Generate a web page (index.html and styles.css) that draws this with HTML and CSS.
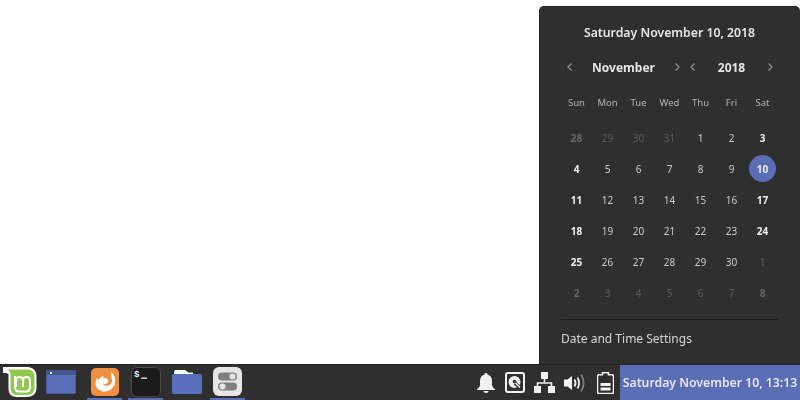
FILE: index.html
```html
<!DOCTYPE html>
<html lang="en">
<head>
  <meta charset="UTF-8">
  <title>Desktop calendar</title>
  <link rel="stylesheet" href="styles.css">
</head>
<body>
  <main class="desktop">
    <section class="calendar-popup">
      <h1 class="today">Saturday November 10, 2018</h1>
      <div class="switchers">
        <div class="switcher month-switcher">
          <svg class="chev" viewBox="0 0 8 10"><path d="M5.500 1.500 2 5l3.500 3.500"/></svg>
          <span>November</span>
          <svg class="chev" viewBox="0 0 8 10"><path d="M2.500 1.500 6 5 2.500 8.500"/></svg>
        </div>
        <div class="switcher year-switcher">
          <svg class="chev" viewBox="0 0 8 10"><path d="M5.500 1.500 2 5l3.500 3.500"/></svg>
          <span>2018</span>
          <svg class="chev" viewBox="0 0 8 10"><path d="M2.500 1.500 6 5 2.500 8.500"/></svg>
        </div>
      </div>
      <div class="weekdays">
        <span>Sun</span><span>Mon</span><span>Tue</span><span>Wed</span><span>Thu</span><span>Fri</span><span>Sat</span>
      </div>
      <div class="days">
        <span class="other weekend">28</span><span class="other">29</span><span class="other">30</span><span class="other">31</span><span>1</span><span>2</span><span class="weekend">3</span>
        <span class="weekend">4</span><span>5</span><span>6</span><span>7</span><span>8</span><span>9</span><span class="selected">10</span>
        <span class="weekend">11</span><span>12</span><span>13</span><span>14</span><span>15</span><span>16</span><span class="weekend">17</span>
        <span class="weekend">18</span><span>19</span><span>20</span><span>21</span><span>22</span><span>23</span><span class="weekend">24</span>
        <span class="weekend">25</span><span>26</span><span>27</span><span>28</span><span>29</span><span>30</span><span class="other">1</span>
        <span class="other weekend">2</span><span class="other">3</span><span class="other">4</span><span class="other">5</span><span class="other">6</span><span class="other">7</span><span class="other weekend">8</span>
      </div>
      <div class="settings-link">Date and Time Settings</div>
    </section>
  </main>

  <footer class="panel">
    <div class="launcher">
      <svg class="menu-icon" viewBox="0 0 34 30">
        <path d="M0 0h24c6 0 9.500 3.500 9.500 9v12c0 5.500-3.500 9-9.500 9H14c-5.500 0-8.500-3-8.500-8.500V8C5.500 6.500 4.500 6 0 6z" fill="#fff"/>
        <path d="M3.500 2.500H24c4.500 0 7.500 2.500 7.500 6.500v12c0 4.500-3 7-7.500 7H14c-3.500 0-6.500-2.500-6.500-6.500V7c0-2-1.500-4-4-4.500z" fill="#8fc94f"/>
        <path d="M12 9v11c0 3 1.500 4.500 4 4.500h7c2.500 0 4-1.500 4-4.500v-6c0-2.500-1.500-4-3.500-4s-3.500 1.500-3.500 4v6M20 14c0-2.500-1.500-4-3.500-4S13 11.500 13 14v6" fill="none" stroke="#fff" stroke-width="2.100"/>
      </svg>
    </div>

    <div class="task task-start">
      <svg class="icon-window" viewBox="0 0 30 24">
        <rect x=".5" y=".5" width="29" height="23" rx="1" fill="#5a6fba" stroke="#4a5c9e"/>
        <rect width="30" height="5" fill="#45568f"/>
        <rect x="4" y="2" width="2" height="2" fill="#fff"/>
      </svg>
    </div>
    <div class="task active">
      <svg class="icon-28" viewBox="0 0 28 28">
        <rect width="28" height="28" rx="5" fill="#ef8f3f"/>
        <path d="M20 4c4 3 5 8 3.500 12.500C21.500 21.500 17 24 12.500 23.500 8 23 4.500 19.500 4.500 15c0-2 .8-4 2-5.500 0 1.500.5 2.300 1.300 2.800C8.500 10 10.500 8 13.500 7.500c-1 1-1.500 1.800-1.500 2.500 2-.3 5 .3 5.500 3-.5 2.500-3 3.500-5.500 3 1 1.500 3.500 2.500 6 1.300 3-1.500 3.800-5 2.500-8-.5-2-1-3.500-.5-5.800z" fill="#fff"/>
      </svg>
    </div>
    <div class="task active">
      <svg class="icon-30" viewBox="0 0 30 30">
        <rect x=".5" y=".5" width="29" height="29" rx="5" fill="#1b1b1b" stroke="#4a4a4a"/>
        <text x="3" y="10" class="prompt">$</text>
        <rect x="10" y="10.500" width="6" height="1.300" fill="#eee"/>
      </svg>
    </div>
    <div class="task">
      <svg class="icon-folder" viewBox="0 0 30 24">
        <path d="M2 4V2c0-1.200.8-2 2-2h8c2 0 3 1.500 4.500 2.500H21V4z" fill="#fff"/>
        <rect y="4" width="30" height="20" rx="1.500" fill="#5a6fba"/>
      </svg>
    </div>
    <div class="task active">
      <svg class="icon-29" viewBox="0 0 29 29">
        <rect width="29" height="29" rx="6" fill="#e6e6e6"/>
        <rect x="5" y="5.500" width="19" height="8" rx="4" fill="#808080"/>
        <circle cx="19.500" cy="9.500" r="3" fill="#e6e6e6"/>
        <rect x="5" y="15.500" width="19" height="8" rx="4" fill="#808080"/>
        <circle cx="9.500" cy="19.500" r="3" fill="#e6e6e6"/>
      </svg>
    </div>

    <div class="tray">
      <svg class="tray-icon bell" viewBox="0 0 18 20">
        <path d="M9 0c1 0 1.500.7 1.500 1.500C13.500 2.300 15 4.800 15 8v4c0 1.500 1.500 3 3 4v1H0v-1c1.500-1 3-2.500 3-4V8c0-3.200 1.500-5.700 4.500-6.500C7.500.7 8 0 9 0z" fill="#f2f2f2"/>
        <path d="M6.500 18h5c0 1.200-1 2-2.500 2s-2.500-.8-2.500-2z" fill="#f2f2f2"/>
      </svg>
      <svg class="tray-icon disk" viewBox="0 0 20 21">
        <rect x="1" y="1" width="18" height="19" rx="2" fill="none" stroke="#f2f2f2" stroke-width="2"/>
        <circle cx="9.500" cy="10" r="6" fill="#f2f2f2"/>
        <circle cx="9.500" cy="9.500" r="1.800" fill="#2f2f2f"/>
        <path d="m10 11 5 5" stroke="#2f2f2f" stroke-width="3.500"/>
        <path d="m10.500 11 4.500 4.500" stroke="#f2f2f2" stroke-width="1.500"/>
      </svg>
      <svg class="tray-icon network" viewBox="0 0 21 21">
        <path d="M7 0h7v7H7zM0 14h7v7H0zM14 14h7v7h-7z" fill="#f2f2f2"/>
        <path d="M10.500 7v4M3.500 14v-3h14v3" fill="none" stroke="#f2f2f2" stroke-width="1.600"/>
      </svg>
      <svg class="tray-icon volume" viewBox="0 0 21 20">
        <path d="M0 6.500h3.500L8 3v14l-4.500-3.500H0z" fill="#f2f2f2"/>
        <path d="M10.500 6.500c1.200 2 1.200 5 0 7" fill="none" stroke="#f2f2f2" stroke-width="1.800"/>
        <path d="M13.500 4.500c2 3 2 8 0 11" fill="none" stroke="#f2f2f2" stroke-width="1.800"/>
        <path d="M17 1.500c3.500 4.500 3.500 12.500 0 17" fill="none" stroke="#7c7c7c" stroke-width="1.800"/>
      </svg>
      <svg class="tray-icon battery" viewBox="0 0 17 22">
        <path d="M5.500.7h6v2h3.500c1 0 1.500.6 1.500 1.500V20c0 1-.6 1.500-1.500 1.500H2c-1 0-1.500-.6-1.500-1.500V4.200c0-.9.500-1.500 1.500-1.500h3.500z" fill="none" stroke="#f2f2f2" stroke-width="1.500"/>
        <path d="M3.500 11h10v3h-10zM3.500 15.500h10v3h-10z" fill="#f2f2f2"/>
      </svg>
    </div>
    <div class="clock">Saturday November 10, 13:13</div>
  </footer>
</body>
</html>
```

FILE: styles.css
```css
* {
  margin: 0;
  padding: 0;
  box-sizing: border-box;
}

body {
  font-family: "Noto Sans", sans-serif;
  background-color: #ffffff;
  height: 400px;
  overflow: hidden;
  display: flex;
  flex-direction: column;
}

.desktop {
  position: relative;
  height: 364px;
}

/* calendar popup */
.calendar-popup {
  position: absolute;
  top: 6px;
  right: 0;
  width: 261px;
  height: 358px;
  padding: 18px 22px 0 21px;
  background-color: #2f2f2f;
  border: 1px solid #232323;
  border-bottom: none;
  border-right: none;
  border-radius: 5px 5px 0 0;
  color: #cccccc;
  will-change: transform;
}

.today {
  font-size: 12.250px;
  font-weight: 600;
  line-height: 16px;
  text-align: center;
  color: #e6e6e6;
}

.switchers {
  display: flex;
  margin-top: 16px;
}

.switcher {
  display: flex;
  align-items: center;
  justify-content: space-between;
  height: 20px;
  font-size: 12px;
  font-weight: 700;
  color: #e6e6e6;
}

.month-switcher {
  width: 120px;
  padding-left: 5px;
}

.year-switcher {
  width: 85px;
  margin-left: 8px;
}

.chev {
  width: 8px;
  height: 10px;
  fill: none;
  stroke: #8e8e8e;
  stroke-width: 1.300;
}

.weekdays,
.days {
  display: grid;
  grid-template-columns: repeat(7, 31px);
  text-align: center;
}

.weekdays {
  margin-top: 19px;
  font-size: 9.500px;
  line-height: 14px;
  color: #b4b4b4;
}

.days {
  grid-auto-rows: 31px;
  margin-top: 12px;
  font-size: 10px;
}

.days span {
  display: flex;
  align-items: center;
  justify-content: center;
}

.days .weekend {
  font-weight: 700;
  color: #f0f0f0;
}

.days .other {
  color: #5c5c5c;
}

.days .other.weekend {
  color: #666666;
}

.days .selected {
  font-weight: 700;
  color: #f0f0f0;
  background-color: #5a6db5;
  border-radius: 50%;
  width: 27px;
  height: 27px;
  margin: 2px;
}

.settings-link {
  margin-top: 11px;
  padding-top: 10px;
  border-top: 1px solid #1d1d1d;
  font-size: 12px;
  line-height: 18px;
  color: #d6d6d6;
}

/* bottom panel */
.panel {
  display: flex;
  height: 36px;
  background-color: #2f2f2f;
  border-top: 1px solid #222222;
}

.launcher {
  width: 46px;
  padding: 2px 0 0 3px;
}

.menu-icon {
  display: block;
  width: 34px;
  height: 30px;
}

.task {
  display: flex;
  justify-content: center;
  align-items: center;
  width: 35px;
  height: 35px;
  margin-right: 6px;
  border-bottom: 2px solid transparent;
}

.task-start {
  justify-content: flex-start;
}

.task.active {
  border-bottom-color: #5a6db5;
}

.icon-window,
.icon-folder {
  flex: none;
  display: block;
  width: 30px;
  height: 24px;
}

.icon-28 {
  flex: none;
  display: block;
  width: 28px;
  height: 28px;
}

.icon-30 {
  flex: none;
  display: block;
  width: 30px;
  height: 30px;
}

.icon-29 {
  flex: none;
  display: block;
  width: 29px;
  height: 29px;
}

.prompt {
  font-family: "Liberation Mono", monospace;
  font-size: 9px;
  font-weight: 700;
  fill: #eeeeee;
}

.tray {
  display: flex;
  align-items: center;
  gap: 9px;
  margin-left: auto;
  padding-right: 6px;
}

.bell {
  width: 18px;
  height: 20px;
}

.disk {
  width: 20px;
  height: 21px;
  margin-left: 1px;
}

.network {
  width: 21px;
  height: 21px;
}

.volume {
  width: 21px;
  height: 20px;
}

.battery {
  width: 17px;
  height: 22px;
  margin-left: 3px;
}

.clock {
  width: 180px;
  line-height: 35px;
  text-align: center;
  font-size: 12.250px;
  font-weight: 600;
  color: #e4e8f5;
  background-color: #5a6db5;
  will-change: transform;
}
```
